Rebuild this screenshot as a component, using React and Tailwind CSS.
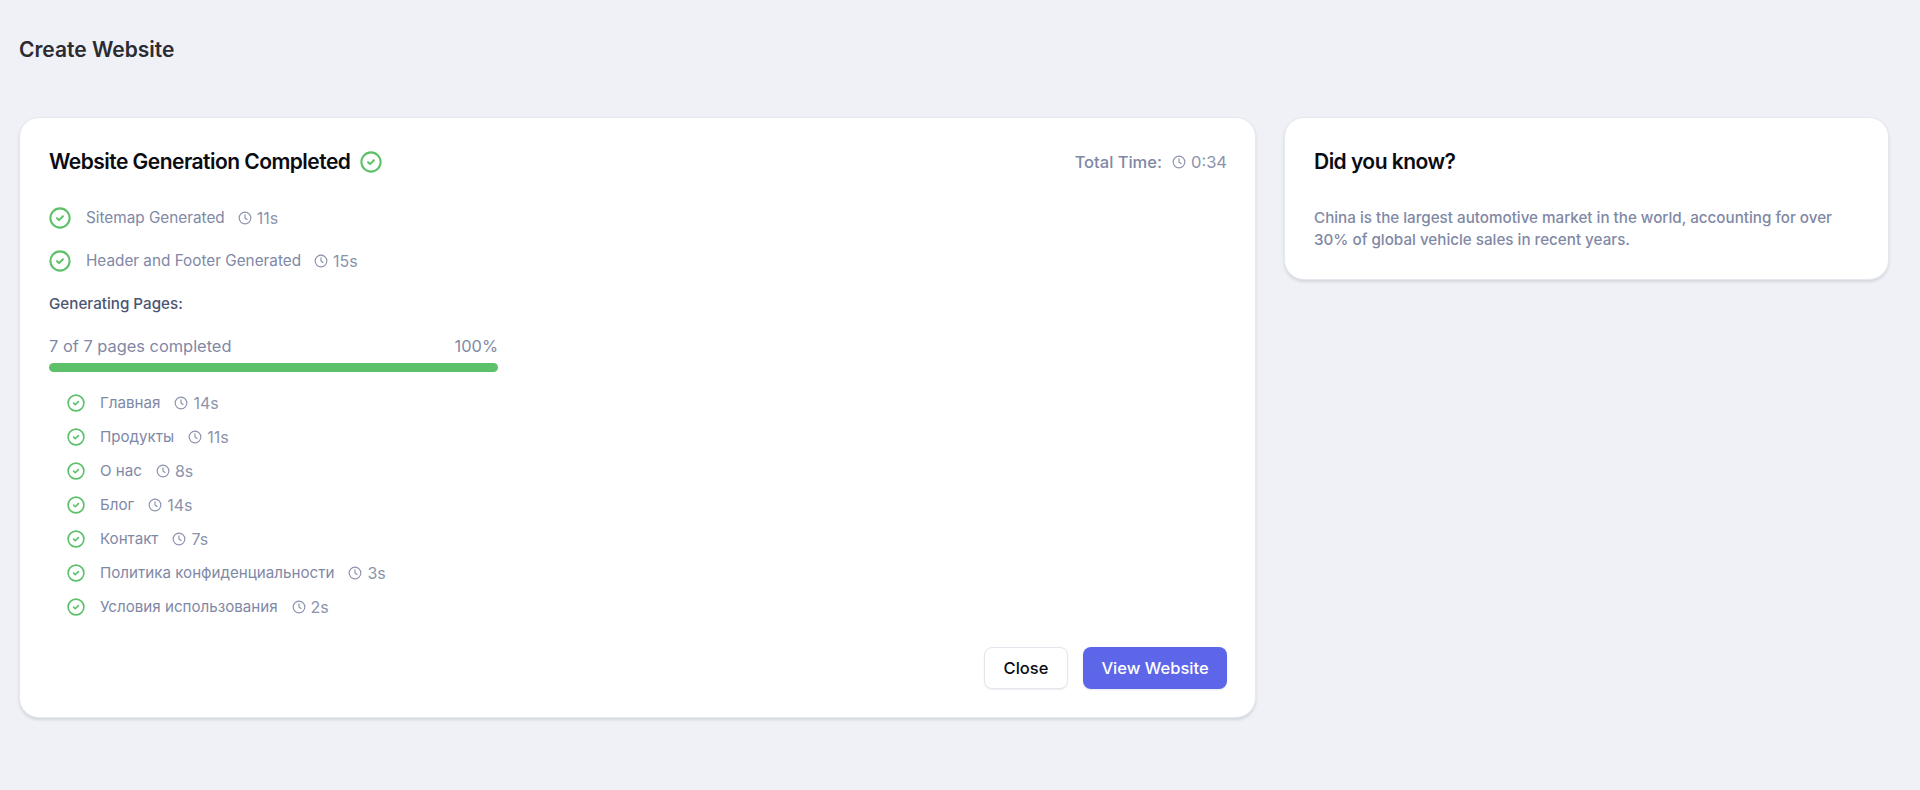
const pages = [
  { name: "Главная", time: "14s" },
  { name: "Продукты", time: "11s" },
  { name: "О нас", time: "8s" },
  { name: "Блог", time: "14s" },
  { name: "Контакт", time: "7s" },
  { name: "Политика конфиденциальности", time: "3s" },
  { name: "Условия использования", time: "2s" },
];

function CheckCircle({ className }) {
  return (
    <svg className={className} viewBox="0 0 24 24" fill="none" stroke="currentColor" strokeWidth="2.2" strokeLinecap="round" strokeLinejoin="round">
      <circle cx="12" cy="12" r="10.5" />
      <path d="M8.8 12.2l2.2 2.1 4.2-4.2" />
    </svg>
  );
}

function Clock({ className }) {
  return (
    <svg className={className} viewBox="0 0 24 24" fill="none" stroke="currentColor" strokeWidth="2" strokeLinecap="round" strokeLinejoin="round">
      <circle cx="12" cy="12" r="10" />
      <path d="M12 6.5V12l3.5 2.5" />
    </svg>
  );
}

function Duration({ time }) {
  return (
    <span className="flex items-center gap-[5px] text-[16px] text-[#8b93ad]">
      <Clock className="h-[14px] w-[14px]" />
      {time}
    </span>
  );
}

export default function App() {
  return (
    <div className="min-h-[790px] bg-[#eff1f6] px-[19px] pt-[36px] font-['Inter',sans-serif]">
      <h1 className="text-[21px] leading-[28px] font-semibold text-[#2b2b33]">Create Website</h1>

      <div className="mt-[53px] flex items-start gap-[28px]">
        <section className="h-[601px] w-[1237px] rounded-[20px] border border-[#e6e8ef] bg-white pt-[31px] pr-[28px] pl-[29px] shadow-[0_2px_3px_rgba(50,55,80,0.14)]">
          <div className="flex items-center justify-between">
            <div className="flex items-center gap-[10px]">
              <h2 className="text-[21px] leading-[26px] font-semibold tracking-[-0.53px] text-[#0b0b12]">Website Generation Completed</h2>
              <CheckCircle className="h-[22px] w-[22px] text-[#5cc168]" />
            </div>
            <div className="flex items-center gap-[10px] text-[16.5px] font-medium text-[#7f88a5]">
              Total Time:
              <span className="flex items-center gap-[5px] font-normal text-[#8b93ad]">
                <Clock className="h-[14px] w-[14px]" />
                0:34
              </span>
            </div>
          </div>

          <div className="mt-[32px] flex flex-col gap-[21px]">
            <div className="flex h-[22px] items-center">
              <CheckCircle className="h-[22px] w-[22px] text-[#5cc168]" />
              <span className="ml-[15px] text-[15.3px] text-[#8088a6]">Sitemap Generated</span>
              <span className="ml-[13px]"><Duration time="11s" /></span>
            </div>
            <div className="flex h-[22px] items-center">
              <CheckCircle className="h-[22px] w-[22px] text-[#5cc168]" />
              <span className="ml-[15px] text-[15.3px] text-[#8088a6]">Header and Footer Generated</span>
              <span className="ml-[13px]"><Duration time="15s" /></span>
            </div>
          </div>

          <p className="mt-[21px] text-[15.2px] leading-[22px] font-medium text-[#4a5572]">Generating Pages:</p>

          <div className="mt-[19px] w-[449px]">
            <div className="flex justify-between text-[16.4px] leading-[24px] text-[#8088a6]">
              <span>7 of 7 pages completed</span>
              <span>100%</span>
            </div>
            <div className="mt-[5px] h-[9px] rounded-full bg-[#5cc168]" />
          </div>

          <ul className="mt-[20px] flex flex-col gap-[12px] pl-[18px]">
            {pages.map((page) => (
              <li className="flex h-[22px] items-center" key={page.name}>
                <CheckCircle className="h-[18px] w-[18px] text-[#5cc168]" />
                <span className="ml-[15px] text-[15.15px] text-[#8088a6]">{page.name}</span>
                <span className="ml-[14px]"><Duration time={page.time} /></span>
              </li>
            ))}
          </ul>

          <div className="mt-[29px] flex justify-end gap-[15px]">
            <button className="h-[42px] w-[84px] rounded-[8px] border border-[#e4e6ee] bg-white text-[16.5px] font-medium text-[#0b0b12] shadow-[0_1px_2px_rgba(50,55,80,0.08)]" type="button">
              Close
            </button>
            <button className="h-[42px] w-[144px] rounded-[8px] bg-[#5d66e8] text-[16.5px] font-medium text-white shadow-[0_1px_2px_rgba(50,55,80,0.12)]" type="button">
              View Website
            </button>
          </div>
        </section>

        <aside className="h-[163px] w-[605px] rounded-[20px] border border-[#e6e8ef] bg-white pt-[31px] pr-[28px] pl-[29px] shadow-[0_2px_3px_rgba(50,55,80,0.14)]">
          <h2 className="text-[21px] leading-[26px] font-semibold tracking-[-0.53px] text-[#0b0b12]">Did you know?</h2>
          <p className="mt-[32px] text-[15.2px] leading-[22px] font-medium text-[#7f88a5]">
            China is the largest automotive market in the world, accounting for over 30% of global vehicle sales in recent years.
          </p>
        </aside>
      </div>
    </div>
  );
}
